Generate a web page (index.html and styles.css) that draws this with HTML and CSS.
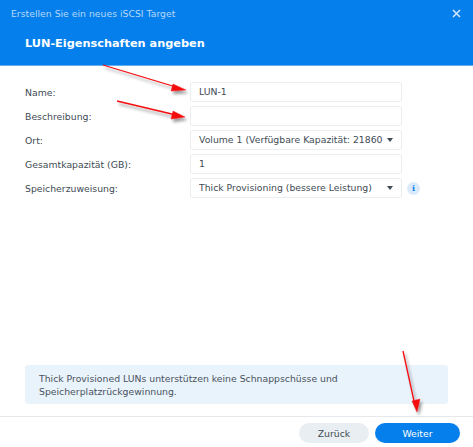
FILE: index.html
```html
<!DOCTYPE html>
<html lang="de">
<head>
<meta charset="utf-8">
<title>LUN-Eigenschaften</title>
<link rel="stylesheet" href="styles.css">
</head>
<body>
<div class="dialog">
  <header class="head">
    <div class="head-top">
      <span class="wiz-title">Erstellen Sie ein neues iSCSI Target</span>
      <svg class="close" width="9" height="9" viewBox="0 0 9 9"><path d="M1 1l7 7M8 1l-7 7" stroke="#d5e9fb" stroke-width="1.5" fill="none"/></svg>
    </div>
    <h1 class="step-title">LUN-Eigenschaften angeben</h1>
  </header>
  <main class="body">
    <form class="form">
      <div class="row"><span class="label">Name:</span><div class="field">LUN-1</div></div>
      <div class="row"><span class="label">Beschreibung:</span><div class="field"></div></div>
      <div class="row"><span class="label">Ort:</span><div class="field select"><span class="value">Volume 1 (Verfügbare Kapazität: 21860</span><i class="caret"></i></div></div>
      <div class="row"><span class="label">Gesamtkapazität (GB):</span><div class="field">1</div></div>
      <div class="row"><span class="label">Speicherzuweisung:</span><div class="field select"><span class="value">Thick Provisioning (bessere Leistung)</span><i class="caret"></i></div><span class="info">i</span></div>
    </form>
    <div class="note">Thick Provisioned LUNs unterstützen keine Schnappschüsse und Speicherplatzrückgewinnung.</div>
  </main>
  <footer class="foot">
    <button class="btn back" type="button">Zurück</button>
    <button class="btn next" type="button">Weiter</button>
  </footer>
  <svg class="arrows" width="473" height="447" viewBox="0 0 473 447">
    <defs>
      <filter id="sh" x="-20%" y="-20%" width="140%" height="140%"><feDropShadow dx="2" dy="3" stdDeviation="1.6" flood-color="#000" flood-opacity=".4"/></filter>
    </defs>
    <g filter="url(#sh)" fill="#f30c10" stroke="#f30c10">
      <path d="M103 65L176 87" stroke-width="1.3"/><path d="M186 90l-13-6-2 7z" stroke-width=".4"/>
      <path d="M117 101L176 115" stroke-width="1.3"/><path d="M185 117l-12-6-2 8z" stroke-width=".4"/>
      <path d="M403 351L414 401" stroke-width="1.3"/><path d="M417 412l3-13-8 2z" stroke-width=".4"/>
    </g>
  </svg>
</div>
</body>
</html>
```
FILE: styles.css
```css
* { box-sizing: border-box; }
html, body { margin: 0; padding: 0; }
body { width: 473px; height: 447px; overflow: hidden; background: #fff; font-family: "DejaVu Sans", Verdana, sans-serif; font-size: 9.3px; color: #414b55; }
.dialog { position: relative; width: 473px; height: 447px; display: flex; flex-direction: column; }
.head { height: 66px; background: #057feb; border-bottom: 1px solid #62adf1; padding: 7px 10px 0 11px; flex: none; }
.head-top { display: flex; justify-content: space-between; align-items: center; height: 12px; }
.wiz-title { font-size: 9.3px; color: #b5d8f8; }
.close { margin-right: 2px; }
.step-title { margin: 17px 0 0 14px; font-size: 11.3px; line-height: 16px; font-weight: 700; color: #fff; }
.body { flex: 1; padding: 16px 25px 0; display: flex; flex-direction: column; justify-content: space-between; }
.form { display: flex; flex-direction: column; gap: 4px; }
.row { display: flex; align-items: center; height: 20px; }
.label { width: 165px; flex: none; }
.field { width: 212px; height: 20px; line-height: 18px; border: 1px solid #e9eef3; border-radius: 3px; padding: 0 8px; background: #fff; white-space: nowrap; overflow: hidden; }
.select { display: flex; justify-content: space-between; align-items: center; padding-right: 8px; }
.caret { width: 0; height: 0; border-left: 3.5px solid transparent; border-right: 3.5px solid transparent; border-top: 4px solid #414b55; flex: none; }
.info { width: 13px; height: 13px; margin-left: 5px; border-radius: 50%; background: #dbeafb; color: #057feb; font: 700 8px/13px "DejaVu Serif", serif; text-align: center; }
.note { height: 39px; margin-bottom: 12px; background: #e9f3fc; border-radius: 3px; padding: 7px 14px 0; line-height: 13px; color: #49525c; }
.foot { flex: none; height: 31px; border-top: 1px solid #e6e8ec; display: flex; justify-content: flex-end; gap: 6px; padding: 6px 13px 0 0; }
.btn { height: 20px; border: 0; border-radius: 10px; font-family: inherit; font-size: 9.3px; padding: 0; }
.back { width: 70px; background: #e9eef3; color: #414b55; }
.next { width: 85px; background: #057feb; color: #fff; }
.arrows { position: absolute; left: 0; top: 0; pointer-events: none; }
```
